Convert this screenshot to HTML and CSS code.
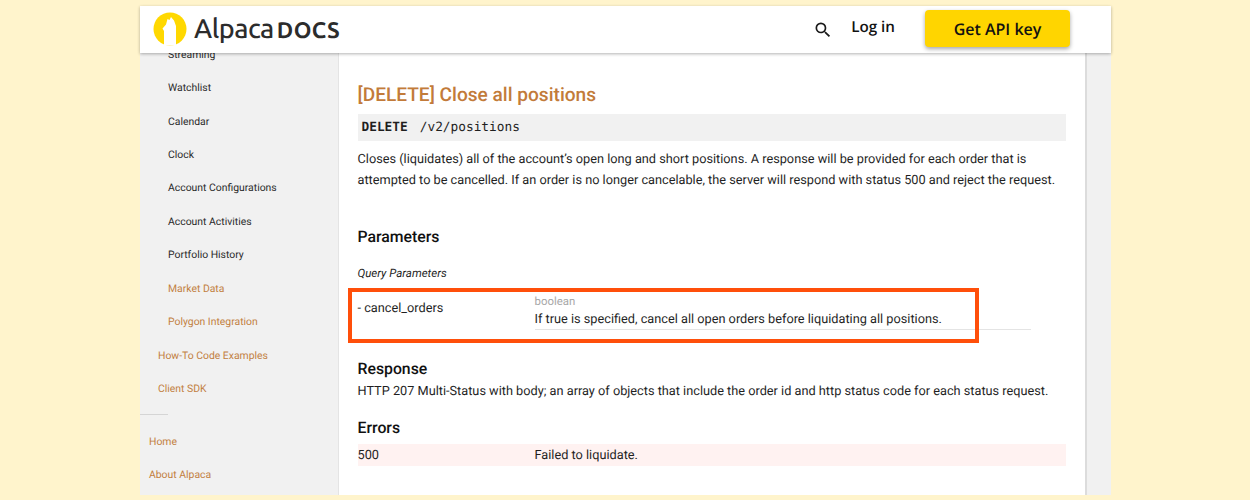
FILE: index.html
```html
<!DOCTYPE html>
<html lang="en">
<head>
<meta charset="utf-8">
<title>Alpaca Docs</title>
<link rel="stylesheet" href="styles.css">
</head>
<body>
<div class="window">
  <header class="topbar">
    <div class="brand">
      <svg class="brand-mark" viewBox="0 0 34 34" width="34" height="34" aria-hidden="true">
        <circle cx="17" cy="17" r="16.5" fill="#ffd800"/>
        <path d="M11 33.5V19L9.5 16.5L13 12.5L14.5 7L16.5 8L18 5L21 8.5L23 14V33.5Z" fill="#fff"/>
      </svg>
      <span class="brand-name">Alpaca</span><span class="brand-docs">DOCS</span>
    </div>
    <nav class="actions">
      <svg class="search" viewBox="0 0 24 24" width="20" height="20" aria-hidden="true">
        <path d="M15.5 14h-.79l-.28-.27A6.47 6.47 0 0 0 16 9.5 6.5 6.5 0 1 0 9.5 16c1.61 0 3.09-.59 4.23-1.57l.27.28v.79l5 4.99L20.49 19l-4.99-5zm-6 0C7.01 14 5 11.99 5 9.5S7.01 5 9.5 5 14 7.01 14 9.5 11.99 14 9.5 14z" fill="#1a1a1a"/>
      </svg>
      <a class="login">Log in</a>
      <a class="cta">Get API key</a>
    </nav>
  </header>
  <div class="body">
    <aside class="sidebar">
      <ul class="nav-list">
        <li class="nav-item sub">Streaming</li>
        <li class="nav-item sub">Watchlist</li>
        <li class="nav-item sub">Calendar</li>
        <li class="nav-item sub">Clock</li>
        <li class="nav-item sub">Account Configurations</li>
        <li class="nav-item sub">Account Activities</li>
        <li class="nav-item sub">Portfolio History</li>
        <li class="nav-item sub link">Market Data</li>
        <li class="nav-item sub link">Polygon Integration</li>
        <li class="nav-item mid link">How-To Code Examples</li>
        <li class="nav-item mid link">Client SDK</li>
      </ul>
      <hr class="nav-rule">
      <ul class="nav-list foot">
        <li class="nav-item top link">Home</li>
        <li class="nav-item top link">About Alpaca</li>
      </ul>
    </aside>
    <main class="content">
      <h1 class="title">[DELETE] Close all positions</h1>
      <div class="endpoint"><b>DELETE</b><span>/v2/positions</span></div>
      <p class="lead">Closes (liquidates) all of the account’s open long and short positions. A response will be provided for each order that is attempted to be cancelled. If an order is no longer cancelable, the server will respond with status 500 and reject the request.</p>
      <h2 class="section params-head">Parameters</h2>
      <h3 class="query">Query Parameters</h3>
      <div class="param">
        <div class="param-name">- cancel_orders</div>
        <div class="param-info">
          <div class="param-type">boolean</div>
          <div class="param-desc">If true is specified, cancel all open orders before liquidating all positions.</div>
        </div>
        <div class="highlight"></div>
      </div>
      <h2 class="section response-head">Response</h2>
      <p class="response">HTTP 207 Multi-Status with body; an array of objects that include the order id and http status code for each status request.</p>
      <h2 class="section errors-head">Errors</h2>
      <div class="error-row"><span class="error-code">500</span><span>Failed to liquidate.</span></div>
    </main>
    <div class="rail"></div>
  </div>
</div>
</body>
</html>
```

FILE: styles.css
```css
* { box-sizing: border-box; }
html, body { margin: 0; height: 100%; }
body {
  background: #fff4cc;
  padding: 6px 139px 5px 140px;
  font-family: Roboto, "Liberation Sans", sans-serif;
  color: #1f1f1f;
  overflow: hidden;
  text-rendering: geometricPrecision;
}
.window { height: 489px; display: flex; flex-direction: column; background: #f1f1f1; }
.topbar {
  flex: none;
  height: 47px;
  background: #fff;
  display: flex;
  align-items: center;
  justify-content: space-between;
  padding: 0 41px 2px 13px;
  box-shadow: 0 1px 3px rgba(0,0,0,.3);
  position: relative;
  z-index: 2;
}
.brand { display: flex; align-items: center; font-family: Ubuntu, "Open Sans", sans-serif; color: #2c2c2c; padding-top: 1px; }
.brand-mark { margin-right: 7px; }
.brand-name { font-size: 27px; font-weight: 500; letter-spacing: -.5px; }
.brand-docs { font-size: 22.5px; font-weight: 600; margin-left: 3px; letter-spacing: .5px; margin-top: 2px; }
.actions { display: flex; align-items: center; font-family: "Open Sans", sans-serif; color: #111; }
.search { margin-right: 18px; margin-top: 2px; }
.login { font-size: 15.2px; font-weight: 600; margin-right: 30px; margin-top: -4px; }
.cta {
  width: 145px;
  height: 37px;
  background: #ffd500;
  border-radius: 4px;
  display: flex;
  align-items: center;
  justify-content: center;
  font-size: 16px;
  font-weight: 600;
  box-shadow: 0 2px 4px rgba(0,0,0,.35);
}
.body { flex: 1; min-height: 0; display: flex; }
.sidebar { flex: none; width: 198px; overflow: hidden; font-size: 10.4px; }
.nav-list { list-style: none; margin: 0; padding: 0; }
.nav-list:first-child { margin-top: -15.5px; }
.nav-item { height: 33.45px; display: flex; align-items: center; }
.sub { padding-left: 28px; color: #2a2a2a; }
.mid { padding-left: 18px; }
.top { padding-left: 9px; }
.link { color: #c27f3f; }
.nav-rule { width: 28px; height: 1px; border: 0; background: #d5d5d5; margin: 8.5px 0 10px; }
.content {
  flex: none;
  width: 749px;
  background: #fff;
  border-right: 2px solid #dcdcdc;
  border-left: 1px solid #e4e4e4;
  padding: 29px 19px 0 18.5px;
  overflow: hidden;
  font-size: 12.74px;
  line-height: 21px;
}
.rail { flex: 1; background: #f1f1f1; }
.title { margin: 0 0 6px; font-size: 19.1px; line-height: 26px; font-weight: 500; color: #c27b3a; }
.endpoint {
  height: 27px;
  background: #f1f1f1;
  display: flex;
  align-items: center;
  padding-left: 4px;
  font-family: "DejaVu Sans Mono", monospace;
  font-size: 12.8px;
}
.endpoint b { margin-right: 12px; }
.lead { margin: 8px 0 0; }
.section { margin: 0; font-size: 15.8px; line-height: 22px; font-weight: 500; color: #111; }
.params-head { margin-top: 35px; }
.query { margin: 16px 0 0; font-size: 11.5px; line-height: 18px; font-weight: 400; font-style: italic; }
.param { position: relative; display: flex; width: 673px; margin-top: 11px; height: 37px; }
.param-name { width: 177px; padding-top: 5px; }
.param-info { flex: 1; border-bottom: 1px solid #e4e4e4; }
.param-type { font-size: 11.4px; line-height: 16px; color: #a8a8a8; }
.param-desc { line-height: 20px; padding-top: 1px; }
.highlight {
  position: absolute;
  left: -9.5px;
  top: -5px;
  width: 631px;
  height: 55px;
  border: 4px solid #ff4f0a;
  pointer-events: none;
}
.response-head { margin-top: 28px; }
.response { margin: 1px 0 0; }
.errors-head { margin-top: 15px; }
.error-row { display: flex; height: 22px; margin-top: 5px; background: #fff2f1; align-items: center; }
.error-code { width: 177px; }
```
